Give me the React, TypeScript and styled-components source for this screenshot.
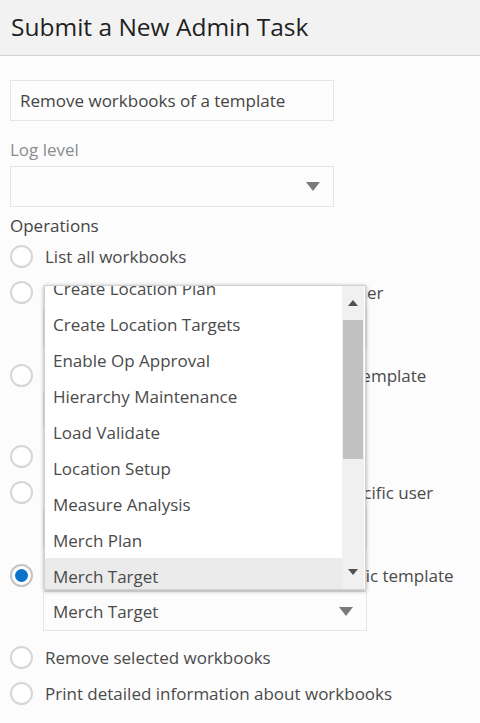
import React from 'react';
import styled, { createGlobalStyle } from 'styled-components';

const GlobalStyle = createGlobalStyle`
  html, body {
    margin: 0;
    padding: 0;
    background: #fcfcfc;
  }
  body {
    font-family: 'Open Sans', 'Noto Sans', sans-serif;
    color: #4a4a4a;
  }
`;

interface Operation {
  label: string;
  sub?: 'select' | 'input';
  value?: string;
  checked?: boolean;
}

const operations: Operation[] = [
  { label: 'List all workbooks' },
  { label: 'Unload all the workbooks of a specific user', sub: 'select' },
  { label: 'Unload all the workbooks for a specific template', sub: 'input' },
  { label: 'Remove all workbooks' },
  { label: 'Remove all of the workbooks from a specific user', sub: 'select' },
  {
    label: 'Remove all of the workbooks for a specific template',
    sub: 'select',
    value: 'Merch Target',
    checked: true,
  },
  { label: 'Remove selected workbooks' },
  { label: 'Print detailed information about workbooks' },
];

const templates = [
  'Create Location Plan',
  'Create Location Targets',
  'Enable Op Approval',
  'Hierarchy Maintenance',
  'Load Validate',
  'Location Setup',
  'Measure Analysis',
  'Merch Plan',
  'Merch Target',
];

export default function App(): JSX.Element {
  return (
    <Page>
      <GlobalStyle />
      <Header>
        <Title>Submit a New Admin Task</Title>
      </Header>
      <Body>
        <TextBox>Remove workbooks of a template</TextBox>
        <FieldLabel>Log level</FieldLabel>
        <SelectBox>
          <Caret />
        </SelectBox>
        <SectionLabel>Operations</SectionLabel>
        <RadioList>
          {operations.map((op) => (
            <RadioItem key={op.label}>
              <RadioRow>
                <Radio checked={!!op.checked} />
                <RadioText>{op.label}</RadioText>
              </RadioRow>
              {op.sub === 'input' && <SubInput />}
              {op.sub === 'select' && (
                <SubSelect open={!!op.checked}>
                  <span>{op.value || ''}</span>
                  <Caret />
                  {op.checked && (
                    <Dropdown>
                      <OptionList>
                        {templates.map((t) => (
                          <OptionItem key={t} active={t === op.value}>
                            {t}
                          </OptionItem>
                        ))}
                      </OptionList>
                      <ScrollBar>
                        <ScrollArrow>
                          <svg width="10" height="6" viewBox="0 0 10 6">
                            <path d="M0 6 L5 0 L10 6 Z" fill="#505050" />
                          </svg>
                        </ScrollArrow>
                        <ScrollTrack>
                          <Thumb />
                        </ScrollTrack>
                        <ScrollArrow>
                          <svg width="10" height="6" viewBox="0 0 10 6">
                            <path d="M0 0 L5 6 L10 0 Z" fill="#505050" />
                          </svg>
                        </ScrollArrow>
                      </ScrollBar>
                    </Dropdown>
                  )}
                </SubSelect>
              )}
            </RadioItem>
          ))}
        </RadioList>
      </Body>
    </Page>
  );
}

const Page = styled.div`
  width: 480px;
  min-height: 723px;
  background: #fcfcfc;
`;

const Header = styled.div`
  height: 56px;
  background: #f2f2f2;
  border-bottom: 1px solid #d4d4d4;
  box-sizing: border-box;
  display: flex;
  align-items: center;
  padding: 0 11px 3px;
`;

const Title = styled.h1`
  margin: 0;
  font-size: 24.5px;
  font-weight: 400;
  color: #1f1f1f;
`;

const Body = styled.div`
  padding: 24px 10px 0;
  display: flex;
  flex-direction: column;
`;

const TextBox = styled.div`
  width: 324px;
  height: 41px;
  box-sizing: border-box;
  border: 1px solid #e6e6e6;
  background: #fdfdfd;
  display: flex;
  align-items: center;
  padding: 0 9px;
  font-size: 17px;
  color: #444;
`;

const FieldLabel = styled.div`
  margin-top: 18px;
  font-size: 17px;
  color: #8c8c8c;
  line-height: 22px;
`;

const SelectBox = styled.div`
  margin-top: 5px;
  width: 324px;
  height: 41px;
  box-sizing: border-box;
  border: 1px solid #e6e6e6;
  display: flex;
  align-items: center;
  justify-content: flex-end;
  padding: 0 13px;
`;

const Caret = styled.div`
  width: 0;
  height: 0;
  border-left: 7px solid transparent;
  border-right: 7px solid transparent;
  border-top: 9px solid #7a7a7a;
`;

const SectionLabel = styled.div`
  margin-top: 8px;
  font-size: 17px;
  color: #444;
  line-height: 22px;
`;

const RadioList = styled.div`
  display: flex;
  flex-direction: column;
  margin-top: 6px;
`;

const RadioItem = styled.div`
  display: flex;
  flex-direction: column;
  padding-bottom: 10px;
`;

const RadioRow = styled.div`
  display: flex;
  align-items: center;
  height: 26px;
  gap: 12px;
`;

const Radio = styled.span<{ checked: boolean }>`
  width: 23px;
  height: 23px;
  box-sizing: border-box;
  border-radius: 50%;
  border: 2px solid ${(p) => (p.checked ? '#c4c4c4' : '#d6d6d6')};
  background: #fff;
  display: flex;
  align-items: center;
  justify-content: center;
  flex-shrink: 0;
  &::after {
    content: '';
    width: 13px;
    height: 13px;
    border-radius: 50%;
    background: ${(p) => (p.checked ? '#0a72c9' : 'transparent')};
  }
`;

const RadioText = styled.span`
  font-size: 17px;
  color: #4a4a4a;
  white-space: nowrap;
`;

const SubInput = styled.div`
  margin: 3px 0 6px 33px;
  width: 323px;
  height: 36px;
  box-sizing: border-box;
  border: 1px solid #e6e6e6;
`;

const SubSelect = styled.div<{ open: boolean }>`
  position: relative;
  margin: 3px 0 ${(p) => (p.open ? '3px' : '4px')} 33px;
  width: 324px;
  height: 40px;
  box-sizing: border-box;
  border: 1px solid #e6e6e6;
  display: flex;
  align-items: center;
  justify-content: space-between;
  padding: 0 13px 0 9px;
  font-size: 17px;
  color: #4a4a4a;
`;

const Dropdown = styled.div`
  position: absolute;
  left: 0;
  bottom: calc(100% + 2px);
  width: 322px;
  height: 305px;
  background: #fff;
  box-shadow: 0 1px 4px rgba(0, 0, 0, 0.35);
  border: 1px solid #d0d0d0;
  box-sizing: border-box;
  overflow: hidden;
  display: flex;
`;

const OptionList = styled.div`
  flex: 1;
  display: flex;
  flex-direction: column;
  margin-top: -16px;
`;

const OptionItem = styled.div<{ active: boolean }>`
  height: 36px;
  flex-shrink: 0;
  display: flex;
  align-items: center;
  padding: 0 8px;
  font-size: 17px;
  color: #4a4a4a;
  background: ${(p) => (p.active ? '#ebebeb' : '#fff')};
`;

const ScrollBar = styled.div`
  width: 22px;
  margin-right: 1px;
  background: #f0f0f0;
  display: flex;
  flex-direction: column;
`;

const ScrollArrow = styled.div`
  height: 34px;
  display: flex;
  align-items: center;
  justify-content: center;
`;

const ScrollTrack = styled.div`
  flex: 1;
  display: flex;
  flex-direction: column;
`;

const Thumb = styled.div`
  height: 139px;
  margin: 0 1px;
  background: #c1c1c1;
`;
